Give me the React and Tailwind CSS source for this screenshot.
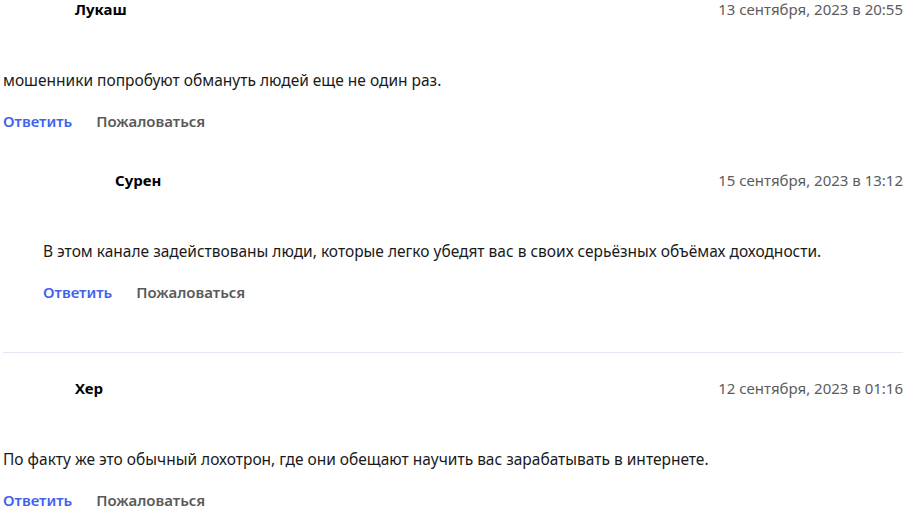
import React from "react";

const comments = [
  {
    id: 1,
    author: "Лукаш",
    date: "13 сентября, 2023 в 20:55",
    text: "мошенники попробуют обмануть людей еще не один раз.",
    replies: [
      {
        id: 2,
        author: "Сурен",
        date: "15 сентября, 2023 в 13:12",
        text: "В этом канале задействованы люди, которые легко убедят вас в своих серьёзных объёмах доходности.",
      },
    ],
  },
  {
    id: 3,
    author: "Хер",
    date: "12 сентября, 2023 в 01:16",
    text: "По факту же это обычный лохотрон, где они обещают научить вас зарабатывать в интернете.",
    replies: [],
  },
];

function Comment({ c }) {
  return (
    <div>
      <div className="flex items-start justify-between h-[71px] pl-[72px]">
        <span className="text-[15px] font-bold leading-[18px] text-black">{c.author}</span>
        <span className="text-[15px] leading-[18px] text-[#5c5c5c]">{c.date}</span>
      </div>
      <p className="text-[15.5px] leading-[18px] text-[#1a1a1a]">{c.text}</p>
      <div className="flex gap-6 mt-[23px] text-[15px] font-semibold leading-[18px]">
        <button className="text-[#3e63f0]">Ответить</button>
        <button className="text-[#5a5a5a]">Пожаловаться</button>
      </div>
    </div>
  );
}

export default function App() {
  return (
    <div
      className="bg-white min-h-screen pl-[3px] pr-[2px]"
      style={{ fontFamily: "'Noto Sans', sans-serif" }}
    >
      {comments.map((c, i) => (
        <div key={c.id} className={i > 0 ? "border-t border-[#e3e8f5] pt-[26px]" : ""}>
          <Comment c={c} />
          {c.replies.map((r) => (
            <div key={r.id} className="pl-10 mt-[41px] pb-[51px]">
              <Comment c={r} />
            </div>
          ))}
        </div>
      ))}
    </div>
  );
}
